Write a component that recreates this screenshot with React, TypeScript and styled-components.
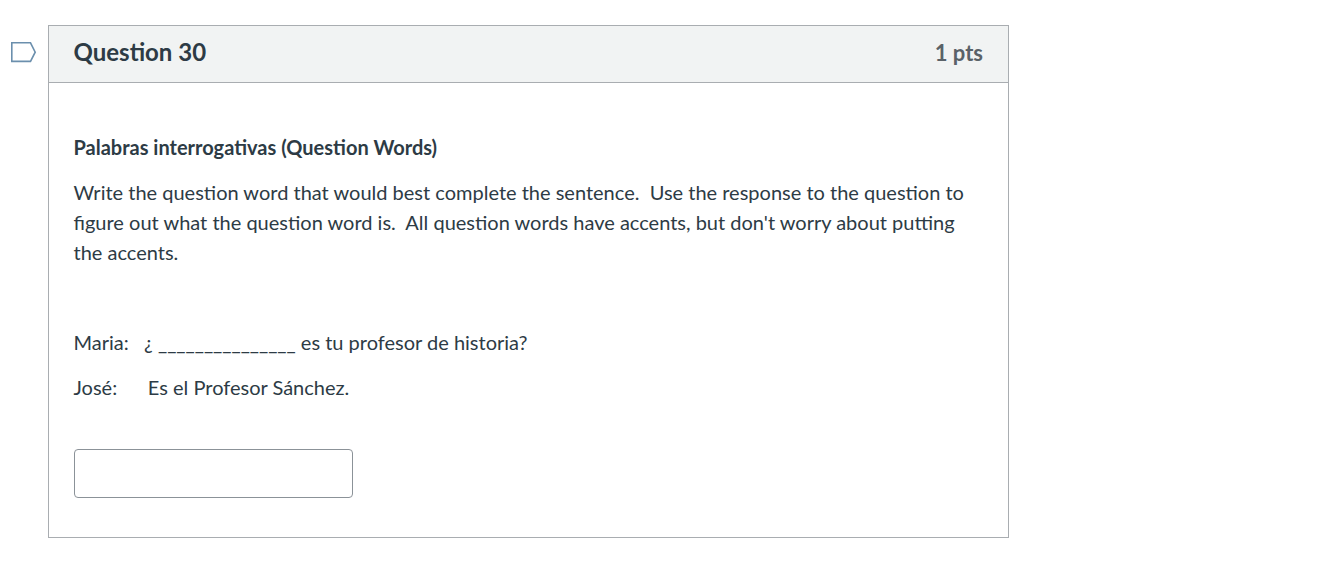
import styled, { createGlobalStyle } from "styled-components";

const GlobalStyle = createGlobalStyle`
	html, body {
		margin: 0;
		padding: 0;
		background: #fff;
	}
	body {
		font-family: Lato, "Open Sans", sans-serif;
		color: #2d3b45;
	}
`;

export default function App() {
	return (
		<>
			<GlobalStyle />
			<Page>
				<FlagGutter>
					<svg width="27" height="22" viewBox="0 0 27 22" aria-hidden="true">
						<path d="M1.8 0.8H20.5L25.2 10.2L20.5 19.4H1.8Z" fill="#fff" stroke="#6b8fad" strokeWidth="1.6" />
					</svg>
				</FlagGutter>
				<Card>
					<CardHeader>
						<Title>Question 30</Title>
						<Points>1 pts</Points>
					</CardHeader>
					<CardBody>
						<Heading>Palabras interrogativas (Question Words)</Heading>
						<Instructions>
							Write the question word that would best complete the sentence.&nbsp; Use the response to the question to
							figure out what the question word is.&nbsp; All question words have accents, but don't worry about putting
							the accents.
						</Instructions>
						<DialogueLine $first>
							Maria:&nbsp;&nbsp; ¿ _______________ es tu profesor de historia?
						</DialogueLine>
						<DialogueLine>José:&nbsp; &nbsp; &nbsp; Es el Profesor Sánchez.</DialogueLine>
						<AnswerInput type="text" aria-label="Answer" />
					</CardBody>
				</Card>
			</Page>
		</>
	);
}

const Page = styled.div`
	display: flex;
	align-items: flex-start;
	width: 1323px;
	height: 563px;
	padding-top: 25px;
	box-sizing: border-box;
	overflow: hidden;
`;
const FlagGutter = styled.div`
	flex: 0 0 48px;
	display: flex;
	padding: 17px 0 0 10px;
	box-sizing: border-box;
`;
const Card = styled.section`
	width: 961px;
	height: 513px;
	box-sizing: border-box;
	border: 1px solid #a9adb1;
`;
const CardHeader = styled.header`
	display: flex;
	align-items: center;
	justify-content: space-between;
	height: 57px;
	box-sizing: border-box;
	padding: 0 25px 6px 24.5px;
	background: #f1f3f3;
	border-bottom: 1px solid #a9adb1;
`;
const Title = styled.h2`
	margin: 0;
	font-size: 24px;
	font-weight: 700;
	color: #2d3b45;
`;
const Points = styled.div`
	margin-top: 2px;
	font-size: 22px;
	font-weight: 700;
	color: #5a6268;
`;
const CardBody = styled.div`
	padding: 49px 25px 0 24.5px;
`;
const Heading = styled.p`
	margin: 0;
	font-size: 20px;
	font-weight: 700;
	line-height: 30px;
`;
const Instructions = styled.p`
	margin: 15px 0 0;
	font-size: 20px;
	line-height: 30px;
`;
const DialogueLine = styled.p<{ $first?: boolean }>`
	margin: ${(p) => (p.$first ? "60px" : "15px")} 0 0;
	font-size: 20px;
	line-height: 30px;
`;
const AnswerInput = styled.input`
	display: block;
	width: 279px;
	height: 49px;
	margin: 47px 0 0 0.5px;
	box-sizing: border-box;
	background: #fff;
	border: 1px solid #8b9298;
	border-radius: 4px;
	outline: none;
`;
